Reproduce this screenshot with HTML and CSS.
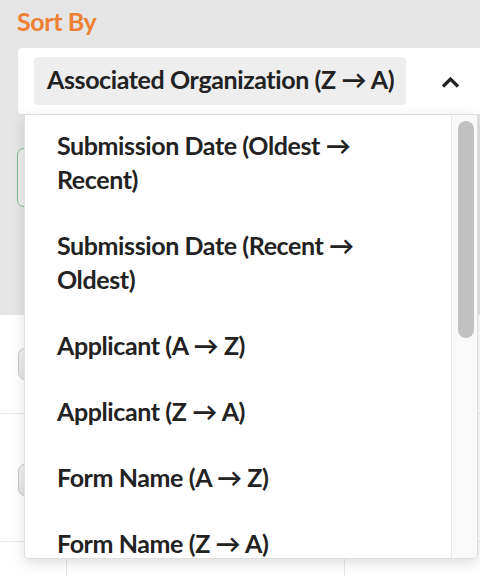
FILE: index.html
```html
<!DOCTYPE html>
<html lang="en">
<head>
<meta charset="utf-8">
<title>Sort By</title>
<link rel="stylesheet" href="styles.css">
</head>
<body>
<div class="page">
  <section class="filters">
    <h2 class="label">Sort By</h2>
    <div class="select">
      <span class="chip">Associated Organization (Z → A)</span>
      <svg class="chevron" width="19" height="13" viewBox="0 0 19 13" aria-hidden="true">
        <path d="M2 11.5 L9.5 4 L17 11.5" fill="none" stroke="#222" stroke-width="3.2"/>
      </svg>
      <div class="dropdown">
        <ul class="list">
          <li class="item">Submission Date (Oldest → Recent)</li>
          <li class="item">Submission Date (Recent → Oldest)</li>
          <li class="item">Applicant (A → Z)</li>
          <li class="item">Applicant (Z → A)</li>
          <li class="item">Form Name (A → Z)</li>
          <li class="item">Form Name (Z → A)</li>
        </ul>
        <div class="track"><div class="thumb"></div></div>
      </div>
    </div>
    <div class="search"></div>
  </section>
  <section class="table">
    <div class="row row-a"><span class="check"></span></div>
    <div class="row row-b"><span class="check"></span></div>
    <div class="row row-c">
      <span class="cell cell-1"></span>
      <span class="cell cell-2"></span>
      <span class="cell cell-3"></span>
    </div>
  </section>
</div>
</body>
</html>
```
FILE: styles.css
```css
* { box-sizing: border-box; }
html, body { margin: 0; padding: 0; }
body {
  width: 480px;
  height: 576px;
  overflow: hidden;
  background: #ffffff;
  font-family: "Lato", "Open Sans", sans-serif;
  font-weight: 700;
  color: #222222;
  letter-spacing: -0.4px;
}
.page { width: 480px; overflow: hidden; height: 576px; }

.filters {
  height: 315px;
  background: #e5e5e5;
  padding: 4px 0 0 17px;
  position: relative;
  z-index: 2;
}
.label {
  margin: 0;
  font-size: 25px;
  line-height: 34px;
  font-weight: 700;
  color: #ef7f33;
}
.select {
  position: relative;
  margin: 10px 0 0 1px;
  width: 480px;
  height: 66px;
  background: #ffffff;
  border-radius: 4px;
  display: flex;
  align-items: center;
  padding: 0 38px 0 16px;
}
.chip {
  display: inline-flex;
  align-items: center;
  height: 48px;
  padding: 0 12px 4px 13px;
  background: #eeeeee;
  border-radius: 4px;
  font-size: 25px;
  line-height: 30px;
  white-space: nowrap;
}
.chevron { margin-left: auto; display: block; }

.dropdown {
  position: absolute;
  top: 100%;
  left: 6px;
  width: 454px;
  height: 445px;
  background: #ffffff;
  border: 1px solid #dedede;
  border-radius: 0 0 5px 5px;
  box-shadow: 0 4px 14px rgba(0, 0, 0, 0.13);
  display: flex;
  overflow: hidden;
}
.list {
  flex: 1;
  margin: 0;
  padding: 0;
  list-style: none;
  overflow: hidden;
}
.item {
  padding: 13px 60px 19px 32px;
  font-size: 25px;
  line-height: 34px;
}
.track {
  width: 26px;
  flex: none;
  background: #f9f9f9;
  border-left: 1px solid #e6e6e6;
  padding: 6px 3px 0 6px;
}
.thumb {
  width: 16px;
  height: 217px;
  background: #c1c1c1;
  border-radius: 8px;
}

.search {
  margin-top: 34px;
  width: 300px;
  height: 59px;
  border: 1px solid #7bbb8c;
  border-radius: 7px;
  background: #f0f0f0;
}

.table { position: relative; z-index: 1; }
.row { border-bottom: 1px solid #e8e8e8; padding-left: 18px; }
.row-a { height: 99px; padding-top: 33px; }
.row-b { height: 128px; padding-top: 50px; }
.row-c { border-bottom: 0; padding-left: 0; display: flex; height: 40px; }
.check {
  display: block;
  width: 28px;
  height: 32px;
  border: 1px solid #c6c6c6;
  border-radius: 7px;
  background: linear-gradient(#f3f3f3, #e6e6e6);
}
.cell { display: block; height: 40px; border-right: 1px solid #e8e8e8; }
.cell-1 { width: 67px; }
.cell-2 { width: 278px; }
.cell-3 { flex: 1; border-right: 0; }
```
